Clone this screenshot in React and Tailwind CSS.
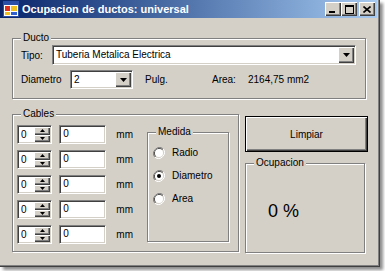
import { useState } from "react";

const sunken =
  "border border-t-[#808080] border-l-[#808080] border-b-white border-r-white shadow-[inset_1px_1px_#404040,inset_-1px_-1px_#d4d0c8]";
const raised =
  "bg-[#d4d0c8] shadow-[inset_1px_1px_#fff,inset_-1px_-1px_#404040,inset_-2px_-2px_#808080]";

function Group({ label, className, labelLeft = "left-[8px]", children }) {
  return (
    <div
      className={`relative border border-[#808080] shadow-[inset_1px_1px_#fff,1px_1px_#fff] ${className}`}
    >
      <span className={`absolute -top-[8px] ${labelLeft} bg-[#d4d0c8] px-[2px] leading-[14px]`}>
        {label}
      </span>
      {children}
    </div>
  );
}

function DownArrow() {
  return (
    <svg width="7" height="4" viewBox="0 0 7 4">
      <path d="M0 0h7L3.5 4z" fill="#000" />
    </svg>
  );
}

function ComboBox({ value, className }) {
  return (
    <div className={`flex items-stretch bg-white ${sunken} p-[1px] ${className}`}>
      <span className="flex-1 pl-[2px] leading-[16px]">{value}</span>
      <div className={`w-[16px] flex items-center justify-center ${raised}`}>
        <DownArrow />
      </div>
    </div>
  );
}

function SpinBox() {
  return (
    <div className={`flex bg-white ${sunken} p-[1px] w-[36px] h-[19px]`}>
      <span className="flex-1 pl-[2px] leading-[15px]">0</span>
      <div className="flex flex-col w-[16px]">
        <div className={`flex-1 flex items-center justify-center ${raised}`}>
          <svg width="5" height="3" viewBox="0 0 5 3">
            <path d="M0 3h5L2.5 0z" fill="#000" />
          </svg>
        </div>
        <div className={`flex-1 flex items-center justify-center ${raised}`}>
          <svg width="5" height="3" viewBox="0 0 5 3">
            <path d="M0 0h5L2.5 3z" fill="#000" />
          </svg>
        </div>
      </div>
    </div>
  );
}

function Radio({ checked, label }) {
  return (
    <div className="flex items-center gap-[7px] h-[23px]">
      <svg width="12" height="12" viewBox="0 0 12 12">
        <path d="M10.2 1.8A6 6 0 0 0 1.8 10.2" fill="none" stroke="#808080" strokeWidth="1" />
        <path d="M9.5 2.5A5 5 0 0 0 2.5 9.5" fill="none" stroke="#404040" strokeWidth="1" />
        <path d="M1.8 10.2A6 6 0 0 0 10.2 1.8" fill="none" stroke="#fff" strokeWidth="1" />
        <circle cx="6" cy="6" r="4" fill="#fff" />
        {checked && <circle cx="6" cy="6" r="2" fill="#000" />}
      </svg>
      <span>{label}</span>
    </div>
  );
}

function TitleButton({ children, className = "" }) {
  return (
    <div className={`w-[16px] h-[14px] flex items-center justify-center ${raised} ${className}`}>
      {children}
    </div>
  );
}

export default function App() {
  const [medida] = useState("Diametro");
  const rows = [0, 1, 2, 3, 4];

  return (
    <div className="w-[385px] h-[271px] bg-white overflow-hidden font-['Liberation_Sans',Arial,sans-serif] text-[10px] text-black">
      <div className="w-[380px] h-[267px] bg-[#d4d0c8] flex flex-col pr-[3px] shadow-[inset_-1px_-1px_#404040,inset_-2px_-2px_#808080,3px_3px_3px_rgba(0,0,0,0.45)]">
        {/* Title bar */}
        <div className="h-[18px] flex items-center bg-gradient-to-r from-[#0a246a] to-[#a6caf0] pl-[3px] pr-[2px]">
          <svg width="16" height="16" viewBox="0 0 16 16">
            <rect x="0.5" y="0.5" width="15" height="15" fill="#fff" stroke="#2a4fa8" />
            <rect x="1" y="1" width="14" height="3" fill="#2a4fa8" />
            <rect x="2" y="5" width="5" height="5" fill="#e03020" />
            <rect x="8" y="5" width="6" height="5" fill="#f0c020" />
            <rect x="2" y="11" width="5" height="3" fill="#f0c020" />
            <rect x="8" y="11" width="6" height="3" fill="#3060d0" />
          </svg>
          <span className="ml-[3px] text-white font-bold text-[11px]">
            Ocupacion de ductos: universal
          </span>
          <div className="ml-auto flex items-center">
            <TitleButton>
              <div className="w-[6px] h-[2px] bg-black mt-[6px] -ml-[2px]" />
            </TitleButton>
            <TitleButton>
              <div className="w-[9px] h-[9px] border border-black border-t-2" />
            </TitleButton>
            <TitleButton className="ml-[2px]">
              <svg width="8" height="7" viewBox="0 0 8 7">
                <path d="M0.5 0.5l7 6M7.5 0.5l-7 6" stroke="#000" strokeWidth="1.6" />
              </svg>
            </TitleButton>
          </div>
        </div>

        {/* Body */}
        <div className="flex flex-col pl-[12px] pt-[20px]">
          <Group label="Ducto" className="w-[354px] h-[61px] pl-[8px] pt-[6px]">
            <div className="flex items-center">
              <span className="w-[31px]">Tipo:</span>
              <ComboBox value="Tuberia Metalica Electrica" className="w-[304px] h-[20px]" />
            </div>
            <div className="flex items-center mt-[5px]">
              <span className="w-[49px]">Diametro</span>
              <ComboBox value="2" className="w-[63px] h-[19px]" />
              <span className="ml-[12px] w-[67px]">Pulg.</span>
              <span className="w-[36px]">Area:</span>
              <span>2164,75 mm2</span>
            </div>
          </Group>

          <div className="flex mt-[15px]">
            <Group label="Cables" className="w-[227px] h-[138px] flex pl-[4px] pt-[10px]">
              <div className="flex flex-col gap-[6px] w-[116px]">
                {rows.map((r) => (
                  <div key={r} className="flex items-center h-[19px]">
                    <SpinBox />
                    <div className={`ml-[7px] w-[48px] h-[19px] bg-white ${sunken} pl-[3px] leading-[15px]`}>
                      0
                    </div>
                    <span className="ml-[10px]">mm</span>
                  </div>
                ))}
              </div>
              <Group
                label="Medida"
                className="ml-[14px] mt-[7px] w-[82px] h-[110px] pl-[5px] pt-[8px]"
              >
                <Radio label="Radio" checked={medida === "Radio"} />
                <Radio label="Diametro" checked={medida === "Diametro"} />
                <Radio label="Area" checked={medida === "Area"} />
              </Group>
            </Group>

            <div className="ml-[6px] flex flex-col">
              <div
                className={`mt-[2px] w-[123px] h-[36px] flex items-center justify-center ${raised} border border-black`}
              >
                Limpiar
              </div>
              <Group label="Ocupacion" className="mt-[11px] w-[120px] h-[90px] pl-[22px] pt-[38px]">
                <span className="text-[18px] leading-[18px]">0 %</span>
              </Group>
            </div>
          </div>
        </div>
      </div>
    </div>
  );
}
